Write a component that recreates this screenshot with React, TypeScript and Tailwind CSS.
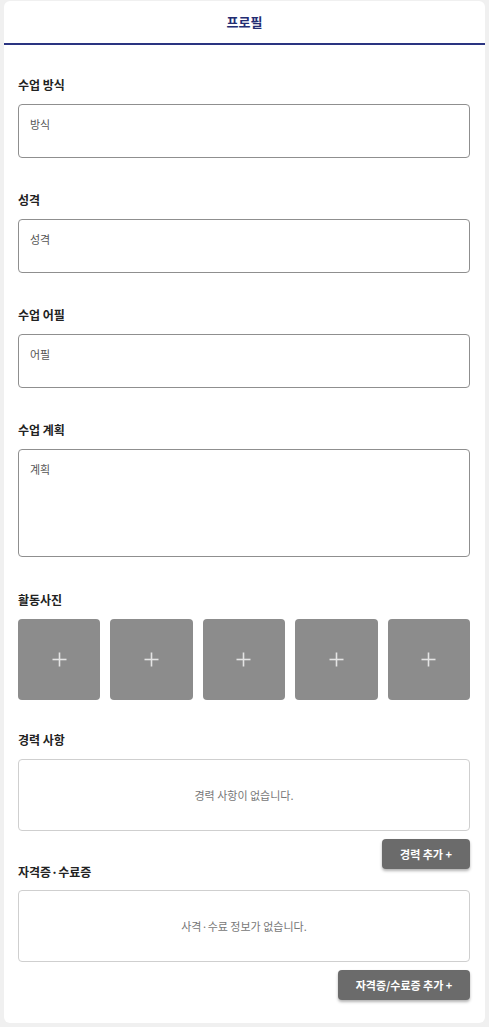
import React from "react";

const font = { fontFamily: '"Noto Sans CJK KR", "Noto Sans", sans-serif' };

function Label({ children, className = "" }: { children: React.ReactNode; className?: string }) {
  return (
    <div className={`text-[12px] leading-[18px] font-bold text-[#222222] ${className}`}>{children}</div>
  );
}

function TextBox({ text, h }: { text: string; h: string }) {
  return (
    <div className={`mt-[10px] ${h} border border-[#8f8f8f] rounded-[4px] bg-white px-[11px] pt-[11px]`}>
      <div className="text-[11px] leading-[17px] text-[#555555]">{text}</div>
    </div>
  );
}

function Plus() {
  return (
    <svg width="15" height="15" viewBox="0 0 15 15">
      <line x1="7.5" y1="0.5" x2="7.5" y2="14.5" stroke="#e4e4e4" strokeWidth="1.6" />
      <line x1="0.5" y1="7.5" x2="14.5" y2="7.5" stroke="#e4e4e4" strokeWidth="1.6" />
    </svg>
  );
}

function Btn({ children, w }: { children: React.ReactNode; w: string }) {
  return (
    <div
      className={`${w} h-[30px] rounded-[4px] bg-[#6b6b6b] text-white text-[11px] font-bold flex items-center justify-center shadow-[0_2px_3px_rgba(0,0,0,0.3)]`}
    >
      {children}
    </div>
  );
}

export default function App() {
  return (
    <div className="min-h-[1027px] bg-[#f0f0f0] px-[4px] pt-[1px] pb-[5px]" style={font}>
      <div className="bg-white rounded-[6px] pb-[23px]">
        <div className="h-[42px] flex items-center justify-center text-[13px] font-bold text-[#232d73]">
          프로필
        </div>
        <div className="h-[2px] bg-[#2a3481]" />
        <div className="pl-[14px] pr-[15px] pt-[31px]">
          <Label>수업 방식</Label>
          <TextBox text="방식" h="h-[54px]" />

          <Label className="mt-[33px]">성격</Label>
          <TextBox text="성격" h="h-[54px]" />

          <Label className="mt-[33px]">수업 어필</Label>
          <TextBox text="어필" h="h-[54px]" />

          <Label className="mt-[33px]">수업 계획</Label>
          <TextBox text="계획" h="h-[108px]" />

          <Label className="mt-[34px]">활동사진</Label>
          <div className="mt-[10px] grid grid-cols-5 gap-[10px]">
            {[0, 1, 2, 3, 4].map((i) => (
              <div key={i} className="h-[81px] rounded-[4px] bg-[#8c8c8c] flex items-center justify-center">
                <Plus />
              </div>
            ))}
          </div>

          <Label className="mt-[31px]">경력 사항</Label>
          <div className="mt-[10px] h-[72px] border border-[#cfcfcf] rounded-[4px] flex items-center justify-center">
            <span className="text-[11px] text-[#777777]">경력 사항이 없습니다.</span>
          </div>
          <div className="mt-[8px] flex justify-end">
            <Btn w="w-[88px]">경력 추가 +</Btn>
          </div>

          <Label className="-mt-[6px]">자격증·수료증</Label>
          <div className="mt-[9px] h-[72px] border border-[#cfcfcf] rounded-[4px] flex items-center justify-center">
            <span className="text-[11px] text-[#777777]">사격·수료 정보가 없습니다.</span>
          </div>
          <div className="mt-[8px] flex justify-end">
            <Btn w="w-[132px]">자격증/수료증 추가 +</Btn>
          </div>
        </div>
      </div>
    </div>
  );
}
